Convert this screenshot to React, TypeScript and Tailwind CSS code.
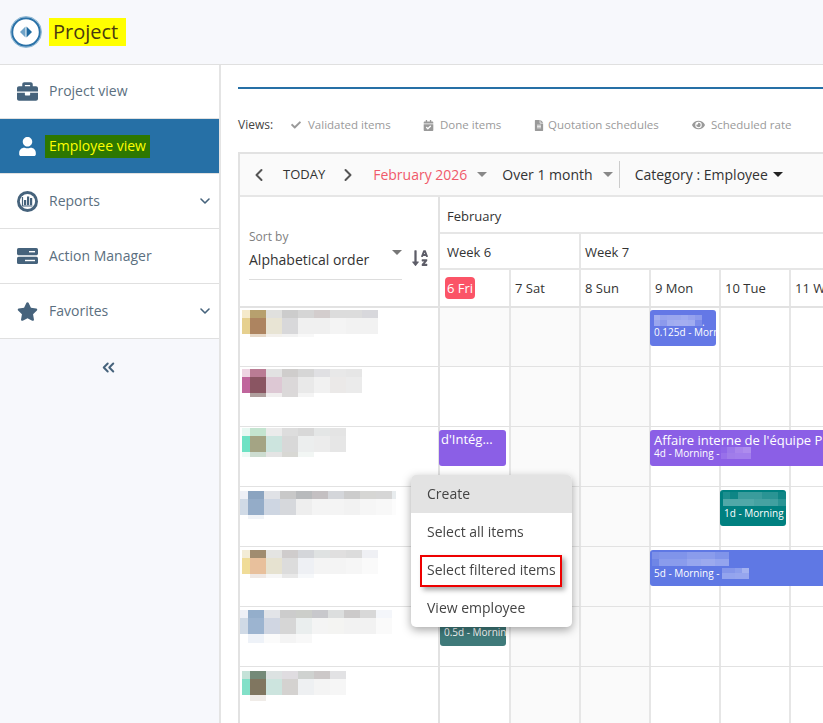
import { ChevronDown, ChevronLeft, ChevronRight, ChevronsLeft } from "lucide-react";
import {
  FaBriefcase,
  FaCalendarCheck,
  FaCheck,
  FaEye,
  FaFileAlt,
  FaSortAlphaDown,
  FaStar,
  FaUser,
} from "react-icons/fa";

type PixelRows = { h: number; colors: string[] }[];

// blurred names, drawn as mosaic blocks
function Pixels({ rows, first = 8, cell = 16, clip }: { rows: PixelRows; first?: number; cell?: number; clip?: number }) {
  const width = first + cell * Math.max(...rows.map((r) => r.colors.length - 1));
  const height = rows.reduce((sum, r) => sum + r.h, 0);
  let y = 0;
  return (
    <svg width={clip ?? width} height={height} className="block" shapeRendering="crispEdges">
      {rows.map((r, i) => {
        const top = y;
        y += r.h;
        return r.colors.map((c, j) => (
          <rect
            key={`${i}-${j}`}
            x={j === 0 ? 0 : first + (j - 1) * cell}
            y={top}
            width={j === 0 ? first : cell}
            height={r.h}
            fill={c}
          />
        ));
      })}
    </svg>
  );
}

const names: { pos: string; clip?: number; rows: PixelRows }[] = [
  {
    pos: "pl-[2px] pt-[2px]",
    rows: [
      { h: 8, colors: ["#f5eacb", "#b7a06e", "#e0e0de", "#cccccc", "#d5d5d5", "#d3cdcd", "#dcdcdc", "#dcdcdc", "#d8d8dc"] },
      { h: 16, colors: ["#e6d08f", "#ad8460", "#e8e4d4", "#d8d8da", "#f0f0f0", "#f0f0f0", "#f4f4f4", "#f2f2f2", "#f2f2f2"] },
      { h: 3, colors: ["#ffffff", "#e6d8c8", "#f3f0ec", "#f2f2f2", "#f8f8f8"] },
    ],
  },
  {
    pos: "pl-[2px] pt-[2px]",
    rows: [
      { h: 8, colors: ["#eed4e2", "#ba7c94", "#e2e2e2", "#cfcdcc", "#d6d6d6", "#e0e0e3", "#e8e8e8", "#e6e6e6"] },
      { h: 16, colors: ["#c0659c", "#8a5562", "#ddc8d4", "#dbd8d9", "#e9e9e9", "#f1f1f1", "#ebe9e8", "#ebebeb"] },
      { h: 4, colors: ["#ffffff", "#b0a09e", "#f0eeee", "#dbd9d9", "#f4f4f4"] },
    ],
  },
  {
    pos: "pl-[2px] pt-[1px]",
    rows: [
      { h: 8, colors: ["#e8f8f2", "#c4e4d0", "#ebebeb", "#dddddd", "#d8d8d8", "#e4e6e6", "#e4e4e4"] },
      { h: 16, colors: ["#6ee2c4", "#a4a484", "#cce4de", "#d8d8d8", "#eceeee", "#ececec", "#e6e6e6"] },
      { h: 5, colors: ["#eefaf6", "#ccdcd0", "#e4e4e4", "#d8d8d4", "#f2f6f4"] },
    ],
  },
  {
    pos: "pl-0 pt-[4px]",
    clip: 156,
    rows: [
      { h: 8, colors: ["#eef0f6", "#8ba4c0", "#e0e2e6", "#c8c8c8", "#b8babc", "#c4c0c2", "#d4d6da", "#cccccc", "#d6d6d4", "#d6d6d6", "#e8ecee"] },
      { h: 16, colors: ["#d0dae6", "#94acc8", "#ced6e2", "#d6d8dc", "#eeeeee", "#f4f4f4", "#f4f4f4", "#f2f2f2", "#f6f6f6", "#f8f8f8", "#fcfcfc"] },
      { h: 4, colors: ["#ffffff", "#f0f3f7", "#ffffff"] },
    ],
  },
  {
    pos: "pl-[2px] pt-[3px]",
    rows: [
      { h: 8, colors: ["#f3ecd6", "#a08c70", "#e4e4e2", "#cfcccc", "#d4d6da", "#dfe2e2", "#e0dfdf", "#dcdcdc", "#eff0f4"] },
      { h: 16, colors: ["#f0dc98", "#e8c09c", "#e6e2d0", "#dcdcdc", "#eef0f4", "#f4f4f4", "#f4f4f4", "#f6f6f6", "#fafafa"] },
      { h: 4, colors: ["#ffffff", "#efe8e4", "#f6f6f6", "#e8e8e8", "#f6f8fa"] },
    ],
  },
  {
    pos: "pl-0 pt-[3px]",
    rows: [
      { h: 8, colors: ["#eef0f6", "#94aecb", "#e2e4e8", "#cccccc", "#ccceca", "#c8c8cc", "#dcdede", "#cccaca", "#d8d8d8", "#f4f6fa"] },
      { h: 16, colors: ["#d0dae6", "#9cb4d0", "#d0d6e2", "#d6d6d6", "#eaeeee", "#f4f4f4", "#f4f4f2", "#f2f2f2", "#f2f2f2", "#fafafa"] },
      { h: 9, colors: ["#ffffff", "#eef2f8", "#fbfbfb", "#f4f4f4", "#f8f8f8"] },
    ],
  },
  {
    pos: "pl-[2px] pt-[4px]",
    rows: [
      { h: 8, colors: ["#c4e2d8", "#748a78", "#dce2e2", "#dfdce0", "#cfd2d0", "#ccc8c8", "#e2e2e4"] },
      { h: 16, colors: ["#82e0c8", "#807660", "#cce4de", "#d4d2d0", "#eef0f2", "#f4f4f4", "#f6f6f6"] },
      { h: 6, colors: ["#ffffff", "#f0ece8"] },
    ],
  },
];

function ReportsIcon() {
  return (
    <svg width="21" height="21" viewBox="0 0 21 21" className="shrink-0">
      <circle cx="10.5" cy="10.5" r="10.5" fill="#46637c" />
      <circle cx="10.5" cy="10.5" r="7.6" fill="#ffffff" />
      <path d="M5.5 6v9h10" fill="none" stroke="#46637c" strokeWidth="1.2" />
      <rect x="7" y="9" width="2.2" height="5.2" fill="#46637c" />
      <rect x="10" y="5.5" width="2.2" height="8.7" fill="#46637c" />
      <rect x="13" y="7" width="2.2" height="7.2" fill="#46637c" />
    </svg>
  );
}

function ActionIcon() {
  return (
    <svg width="21" height="16" viewBox="0 0 21 16" className="shrink-0">
      <rect y="0" width="21" height="7.2" rx="1.6" fill="#46637c" />
      <rect y="8.8" width="21" height="7.2" rx="1.6" fill="#46637c" />
      <rect x="12" y="3" width="6" height="1.4" fill="#ffffff" />
      <rect x="8" y="11.8" width="10" height="1.4" fill="#ffffff" />
    </svg>
  );
}

function Logo() {
  return (
    <svg width="32" height="32" viewBox="0 0 32 32" className="shrink-0">
      <circle cx="16" cy="16" r="15.5" fill="none" stroke="#8db8d4" strokeWidth="1" />
      <circle cx="16" cy="16" r="13.8" fill="#ffffff" stroke="#2a72a8" strokeWidth="2" />
      <path d="M15.5 10.5l-5.5 5.5 5.5 5.5z" fill="#6fa3c8" />
      <path d="M16.5 10.5l5.5 5.5-5.5 5.5z" fill="#1f6aa0" />
    </svg>
  );
}

function NavItem({ icon, label, chevron, height = "h-[55px]" }: { icon: React.ReactNode; label: string; chevron?: boolean; height?: string }) {
  return (
    <div className={`flex items-center border-b border-[#e0e0e0] bg-white pl-[17px] pr-[6px] text-[14px] text-[#5b6f80] ${height}`}>
      <div className="flex w-[32px] shrink-0 items-center">{icon}</div>
      <span className="pb-[2px]">{label}</span>
      {chevron && <ChevronDown className="ml-auto h-[16px] w-[16px] text-[#46637c]" strokeWidth={2.4} />}
    </div>
  );
}

function ViewToggle({ icon, label, className }: { icon: React.ReactNode; label: string; className: string }) {
  return (
    <div className={`flex items-center text-[#9a9a9a] ${className}`}>
      {icon}
      <span>{label}</span>
    </div>
  );
}

function Caret({ className }: { className: string }) {
  return <span className={`inline-block h-0 w-0 border-x-[5px] border-t-[5px] border-x-transparent ${className}`} />;
}

function EventBar({ className, children }: { className: string; children: React.ReactNode }) {
  return (
    <div className={`absolute z-10 h-[36px] overflow-hidden whitespace-nowrap rounded-[3px] text-white ${className}`}>
      {children}
    </div>
  );
}

const days = ["6 Fri", "7 Sat", "8 Sun", "9 Mon", "10 Tue", "11 Wed"];
const weekend = [false, true, true, false, false, false];

export default function App() {
  return (
    <div className="h-[723px] w-[823px] overflow-hidden bg-white font-['Open_Sans',sans-serif] text-[#333]">
      <header className="flex h-[65px] items-center border-b border-[#e0e0e0] bg-[#f7f8fc] pl-[10px]">
        <Logo />
        <span className="ml-[7px] flex h-[28px] w-[77px] items-center bg-[#ffff00] pl-[4px] text-[20px] text-[#4a3a10]">Project</span>
      </header>

      <div className="flex h-[658px]">
        <aside className="flex w-[221px] shrink-0 flex-col border-r-2 border-[#e4e4e4] bg-[#f7f8fc]">
          <NavItem height="h-[54px]" icon={<FaBriefcase className="h-[21px] w-[21px] text-[#46637c]" />} label="Project view" />
          <div className="flex h-[55px] items-center border-b border-[#e0e0e0] bg-[#2670a6] pl-[18px] text-[14px]">
            <FaUser className="h-[19px] w-[19px] text-white" />
            <span className="ml-[8px] flex h-[23px] items-center bg-[#2d7700] px-[4px] pb-[2px] text-[#ffff00]">Employee view</span>
          </div>
          <NavItem icon={<ReportsIcon />} label="Reports" chevron />
          <NavItem icon={<ActionIcon />} label="Action Manager" />
          <NavItem icon={<FaStar className="h-[21px] w-[21px] text-[#46637c]" />} label="Favorites" chevron />
          <div className="flex justify-center pt-[19px] pr-[2px]">
            <ChevronsLeft className="h-[19px] w-[19px] text-[#46637c]" strokeWidth={2.5} />
          </div>
        </aside>

        <main className="min-w-0 flex-1 pl-[17px]">
          <div className="mt-[22px] h-[2px] bg-[#2670a6]" />

          <div className="mt-[28px] flex h-[16px] items-center text-[11.5px]">
            <span className="w-[53px] text-[12px] text-[#444]">Views:</span>
            <ViewToggle icon={<FaCheck className="mr-[7px] h-[10px] w-[10px]" />} label="Validated items" className="w-[132px]" />
            <ViewToggle icon={<FaCalendarCheck className="mr-[6px] h-[11px] w-[11px]" />} label="Done items" className="w-[111px]" />
            <ViewToggle icon={<FaFileAlt className="mr-[4px] h-[11px] w-[10px]" />} label="Quotation schedules" className="w-[158px]" />
            <ViewToggle icon={<FaEye className="mr-[6px] h-[12px] w-[13px]" />} label="Scheduled rate" className="" />
          </div>

          <div className="mt-[19px] border-t-2 border-l-2 border-[#e2e2e2]">
            <div className="flex h-[43px] items-center border-b-2 border-[#e6e6e6] bg-[#fafafa] text-[14px]">
              <ChevronLeft className="ml-[9px] h-[20px] w-[20px] text-[#555]" strokeWidth={2.4} />
              <span className="ml-[14px] text-[13px] text-[#333]">TODAY</span>
              <ChevronRight className="ml-[13px] h-[20px] w-[20px] text-[#555]" strokeWidth={2.4} />
              <span className="ml-[15px] text-[#f0596a]">February 2026</span>
              <Caret className="ml-[10px] border-t-[#888]" />
              <span className="ml-[15px] text-[#333]">Over 1 month</span>
              <Caret className="ml-[10px] border-t-[#888]" />
              <div className="ml-[6px] h-[27px] w-px bg-[#ccc]" />
              <span className="ml-[15px] text-[#333]">Category : Employee</span>
              <Caret className="ml-[5px] border-t-[#222]" />
            </div>

            <div className="flex h-[111px] border-b-2 border-[#e2e2e2]">
              <div className="flex w-[200px] shrink-0 flex-col border-r-2 border-[#e2e2e2] pt-[32px] pl-[9px]">
                <span className="text-[12px] leading-[16px] text-[#808080]">Sort by</span>
                <div className="mt-[4px] flex items-start">
                  <div className="w-[153px] border-b border-[#ddd] pb-[8px] text-[14px] leading-[22px] text-[#333]">
                    <span>Alphabetical order</span>
                  </div>
                  <Caret className="relative top-[1px] -ml-[10px] border-t-[#777]" />
                  <FaSortAlphaDown className="ml-[9px] mt-0 h-[18px] w-[18px] text-[#5d5d68]" />
                </div>
              </div>

              <div className="min-w-0 flex-1 text-[13px] text-[#333]">
                <div className="flex h-[37px] items-center border-b-2 border-[#e6e6e6] pt-[4px] pl-[7px]">February</div>
                <div className="flex h-[36px] border-b-2 border-[#e6e6e6]">
                  <div className="flex w-[139px] items-center pt-[3px] pl-[7px]">Week 6</div>
                  <div className="flex flex-1 items-center border-l-2 border-[#e6e6e6] pt-[3px] pl-[4px]">Week 7</div>
                </div>
                <div className="flex h-[36px]">
                  {days.map((d, i) => (
                    <div key={d} className={`flex h-full shrink-0 items-center ${i === 0 ? "w-[69px] pl-[5px]" : "w-[70px] border-l-2 border-[#e6e6e6] pt-[2px] pl-[4px]"}`}>
                      {i === 0 ? <span className="flex h-[22px] w-[30px] items-center justify-center rounded-[4px] bg-[#fb5467] pt-px text-white">{d}</span> : d}
                    </div>
                  ))}
                </div>
              </div>
            </div>

            {names.map((n, r) => (
              <div key={r} className={`flex border-b border-[#e2e2e2] ${r === 0 ? "h-[59px]" : "h-[60px]"}`}>
                <div className={`w-[200px] shrink-0 border-r-2 border-[#e2e2e2] ${n.pos}`}>
                  <Pixels rows={n.rows} clip={n.clip} />
                </div>
                <div className="relative flex min-w-0 flex-1">
                  {days.map((d, i) => (
                    <div
                      key={d}
                      className={`h-full shrink-0 ${i > 0 ? "w-[70px] border-l-2 border-[#e6e6e6]" : "w-[69px]"} ${weekend[i] || (r === 0 && i === 0) ? "bg-[#fafafa]" : ""}`}
                    />
                  ))}

                  {r === 0 && (
                    <EventBar className="top-[2px] left-[210px] w-[66px] bg-[#6478e6] pl-[4px] pt-[5px] text-[10px] leading-[13px]">
                      <div className="flex h-[11px] items-end">
                        <Pixels
                          first={6}
                          cell={7}
                          rows={[
                            { h: 5, colors: ["#a2adf0", "#96a3ee", "#9aa6ee", "#9aa6ee", "#9eaaf0", "#96a2ee", "#8c9aec"] },
                            { h: 6, colors: ["#9aa6ee", "#8c9aec", "#a0acf0", "#a4aef0", "#a4aef0", "#a0acf0", "#7c8cea"] },
                          ]}
                        />
                        <span className="leading-[8px]">.</span>
                      </div>
                      <div>0.125d - Morning</div>
                    </EventBar>
                  )}
                  {r === 2 && (
                    <>
                      <EventBar className="top-[3px] -left-px w-[67px] bg-[#8b5fe6] pl-[2px] text-[13px] leading-[19px]">d'Intég...</EventBar>
                      <EventBar className="top-[3px] left-[210px] w-[201px] bg-[#8b5fe6] pl-[4px] text-[13px] leading-[15px]">
                        <div className="mt-[3px]">Affaire interne de l'équipe P</div>
                        <div className="-mt-px flex items-center text-[10px] leading-[12px]">
                          <span>4d - Morning -</span>
                          <div className="ml-[2px]">
                            <Pixels
                              first={6}
                              cell={8}
                              rows={[
                                { h: 6, colors: ["#8f66e8", "#9c78ea", "#a884ec", "#ae8cee"] },
                                { h: 6, colors: ["#9870ea", "#a07cea", "#a27eec", "#a27eec"] },
                              ]}
                            />
                          </div>
                        </div>
                      </EventBar>
                    </>
                  )}
                  {r === 3 && (
                    <EventBar className="top-[3px] left-[280px] w-[66px] bg-[#008080] px-[3px] pt-[2px] text-[10px] leading-[13px]">
                      <Pixels
                        first={7}
                        cell={8}
                        rows={[
                          { h: 7, colors: ["#1c8e8e", "#0e8686", "#3a9c9c", "#3a9c9c", "#3a9c9c", "#2a9494", "#2a9494", "#108686"] },
                          { h: 7, colors: ["#50a8a8", "#50a8a8", "#50a8a8", "#50a8a8", "#46a2a2", "#46a2a2", "#40a0a0", "#2a9494"] },
                        ]}
                      />
                      <div className="mt-[1px] pl-[1px]">1d - Morning</div>
                    </EventBar>
                  )}
                  {r === 4 && (
                    <EventBar className="top-[3px] left-[210px] w-[201px] bg-[#5f78e4] pl-[2px] pt-[2px] text-[10px] leading-[13px]">
                      <Pixels
                        first={7}
                        cell={14}
                        rows={[
                          { h: 7, colors: ["#7c90e8", "#8094ea", "#8094ea", "#8a9cec", "#8a9cec", "#8094ea"] },
                          { h: 7, colors: ["#6f86e6", "#8a9cec", "#8a9cec", "#96a6ee", "#9caaee", "#94a4ee"] },
                        ]}
                      />
                      <div className="mt-[1px] flex items-center pl-[2px]">
                        <span>5d - Morning -</span>
                        <div className="ml-[3px]">
                          <Pixels
                            first={6}
                            cell={7}
                            rows={[
                              { h: 5, colors: ["#8496ea", "#8496ea", "#8c9eec", "#a4b2f0"] },
                              { h: 6, colors: ["#93a4ee", "#93a4ee", "#96a6ee", "#96a6ee"] },
                            ]}
                          />
                        </div>
                      </div>
                    </EventBar>
                  )}
                  {r === 5 && (
                    <EventBar className="top-[3px] left-0 w-[66px] bg-[#3f7a7a] pl-[4px] pt-[16px] text-[10px] leading-[13px] text-[#d8e6e0]">
                      0.5d - Morning
                    </EventBar>
                  )}
                </div>
              </div>
            ))}
          </div>
        </main>
      </div>

      {/* context menu */}
      <div className="fixed left-[411px] top-[475px] z-20 w-[161px] overflow-hidden rounded-[5px] bg-white text-[14px] text-[#444] shadow-[0_3px_10px_rgba(0,0,0,0.35)]">
        <div className="flex h-[38px] items-center bg-[#e3e3e3] pb-[2px] pl-[16px]">Create</div>
        <div className="flex h-[38px] items-center pb-[2px] pl-[16px]">Select all items</div>
        <div className="flex h-[38px] items-center pb-[2px] pl-[16px]">Select filtered items</div>
        <div className="flex h-[38px] items-center pb-[2px] pl-[16px]">View employee</div>
      </div>
      <div className="fixed left-[420px] top-[555px] z-30 h-[32px] w-[142px] border-2 border-[#ee0000] shadow-[3px_3px_5px_rgba(0,0,0,0.35)]" />
    </div>
  );
}
